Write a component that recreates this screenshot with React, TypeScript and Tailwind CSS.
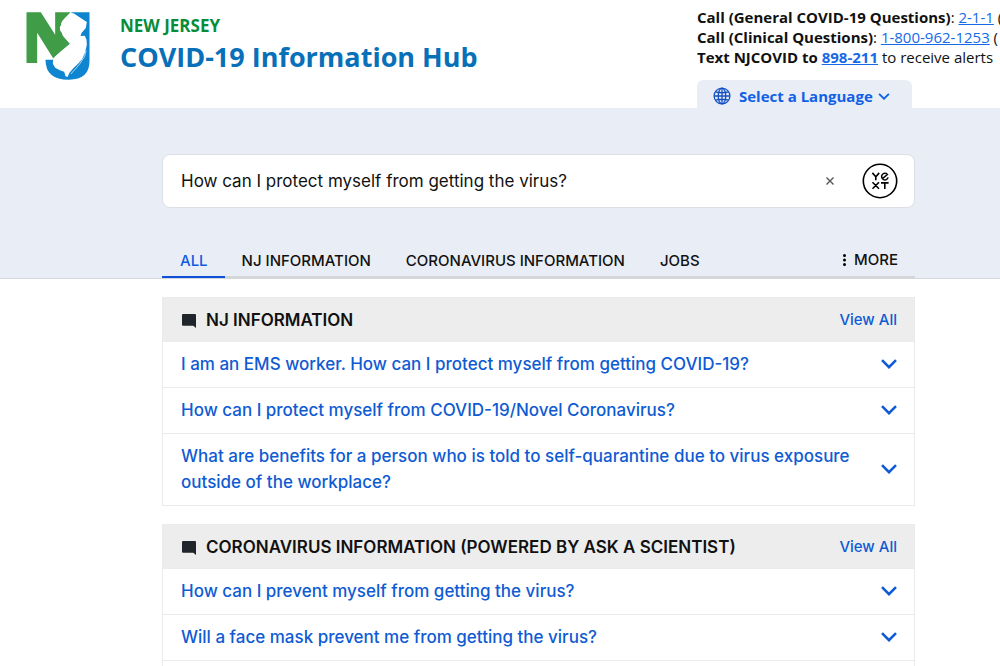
import { useState } from "react";

const sections = [
  {
    title: "NJ INFORMATION",
    questions: [
      "I am an EMS worker. How can I protect myself from getting COVID-19?",
      "How can I protect myself from COVID-19/Novel Coronavirus?",
      "What are benefits for a person who is told to self-quarantine due to virus exposure outside of the workplace?",
    ],
  },
  {
    title: "CORONAVIRUS INFORMATION (POWERED BY ASK A SCIENTIST)",
    questions: [
      "How can I prevent myself from getting the virus?",
      "Will a face mask prevent me from getting the virus?",
      "",
    ],
  },
];

const tabs = ["NJ INFORMATION", "CORONAVIRUS INFORMATION", "JOBS"];

function Logo() {
  return (
    <svg className="h-[68px] w-16 shrink-0" viewBox="50 35 191 204" role="img" aria-label="NJ">
      <path fill="#0d85d0" d="M186 36H240V182Q240 238 178 238Q108 238 108 178H140L175 130Z" />
      <path fill="#409c46" d="M51 36H94L137 103V36H183L156 66L152 86L160 104L181 130L152 156L131 174L83 97V188H51Z" />
      <path
        fill="#fff"
        d="M183 38L192 39L232 65L229 83L216 98L213 107L226 106L231 118L232 134L226 158L218 176L205 191L192 203L180 217L174 230L168 228L164 214L151 210L137 202L130 190L131 179L138 168L152 155L158 150L181 130L160 106L158 98L152 91L151 80L158 72L158 62L170 49Z"
      />
      <path fill="none" stroke="#fff" strokeWidth="2" d="M230 150L225 169L209 193L184 221" />
    </svg>
  );
}

function Globe() {
  return (
    <svg className="size-[18px]" viewBox="0 0 18 18" fill="none" stroke="#1550c4" strokeWidth="1.3" aria-hidden="true">
      <circle cx="9" cy="9" r="7.9" />
      <ellipse cx="9" cy="9" rx="3.8" ry="7.9" />
      <path d="M9 1V17M1 9H17M2.4 4.9Q9 6.6 15.6 4.9M2.4 13.1Q9 11.4 15.6 13.1" />
    </svg>
  );
}

function Chevron({ className }: { className: string }) {
  return (
    <svg className={className} viewBox="0 0 16 10" fill="none" stroke="currentColor" strokeWidth="2.6" aria-hidden="true">
      <path d="M1 1.2L8 8.2L15 1.2" />
    </svg>
  );
}

function YextLogo() {
  return (
    <svg className="size-9" viewBox="0 0 36 36" fill="none" stroke="#000" strokeWidth="1.6" aria-hidden="true">
      <circle cx="18" cy="18" r="16.7" />
      <path d="M10.4 9.9L13.8 13.7L17.2 9.9M13.8 13.7V17.3" />
      <path d="M20.4 15.6L25.4 11.5A3.3 3.3 0 1 0 26.1 14.4" strokeWidth="1.5" />
      <path d="M10.5 19.2L17 25.7M17 19.2L10.5 25.7M19 19.9H26.6M22.8 19.9V26" />
    </svg>
  );
}

export default function App() {
  const [query, setQuery] = useState("How can I protect myself from getting the virus?");
  return (
    <div className="h-screen overflow-hidden bg-white font-['Inter',sans-serif] text-[#111]">
      <header className="flex h-[108px] justify-between overflow-hidden pl-[26px] font-['Open_Sans',sans-serif]">
        <a href="#home" className="flex items-start gap-[30px] pt-3">
          <Logo />
          <span className="flex flex-col pt-1">
            <span className="text-[17px] leading-5 font-bold text-[#078d39]">NEW JERSEY</span>
            <span className="text-[27px] leading-[42px] font-bold whitespace-nowrap text-[#0870b8]">
              COVID-19 Information Hub
            </span>
          </span>
        </a>
        <div className="flex w-[303px] flex-col items-start justify-between overflow-hidden pt-[7px]">
          <div className="text-[15px] leading-5 whitespace-nowrap">
            <p>
              <b>Call (General COVID-19 Questions)</b>: <a href="tel:211" className="text-[#1769e8] underline">2-1-1</a> (
            </p>
            <p>
              <b>Call (Clinical Questions)</b>: <a href="tel:18009621253" className="text-[#1769e8] underline">1-800-962-1253</a> (
            </p>
            <p>
              <b>Text NJCOVID to <a href="sms:898211" className="text-[#1769e8] underline">898-211</a></b> to receive alerts
            </p>
          </div>
          <button className="flex h-7 items-center rounded-t-md bg-[#e9eef6] pt-1 pr-[22px] pl-4 text-[15px] font-bold text-[#1260e6]">
            <Globe />
            <span className="pr-[5px] pl-2">Select a Language</span>
            <Chevron className="h-[7px] w-3" />
          </button>
        </div>
      </header>

      <div className="border-b border-[#d5d9de] bg-[#e9eef6] pt-[46px] pr-[85px] pl-[162px]">
        <form
          className="flex h-[54px] items-center rounded-lg border border-[#dcdfe3] bg-white pr-4 pl-[18px]"
          onSubmit={(e) => e.preventDefault()}
        >
          <input
            aria-label="Search"
            className="min-w-0 flex-1 text-[17px] leading-6 outline-none"
            value={query}
            onChange={(e) => setQuery(e.target.value)}
          />
          <button type="button" aria-label="Clear" className="mr-6 p-1" onClick={() => setQuery("")}>
            <svg className="size-2" viewBox="0 0 8 8" stroke="#555" strokeWidth="1.4" aria-hidden="true">
              <path d="M0.5 0.5L7.5 7.5M7.5 0.5L0.5 7.5" />
            </svg>
          </button>
          <button type="submit" aria-label="Submit">
            <YextLogo />
          </button>
        </form>
        <nav className="mt-[35px] flex h-[35px] border-b-2 border-[#d5d6d8] text-[15px] leading-[35px] font-medium whitespace-nowrap">
          <a href="#all" className="h-[35px] border-b-2 border-[#0f50d8] pr-[17px] pl-[18px] text-[#0f5be0]">
            ALL
          </a>
          {tabs.map((tab) => (
            <a key={tab} href="#results" className="pr-[18px] pl-[17px]">
              {tab}
            </a>
          ))}
          <button className="ml-auto flex items-center gap-2 pr-[17px]">
            <svg className="h-3 w-[3px]" viewBox="0 0 3 12" aria-hidden="true">
              <circle cx="1.5" cy="1.6" r="1.5" />
              <circle cx="1.5" cy="6" r="1.5" />
              <circle cx="1.5" cy="10.4" r="1.5" />
            </svg>
            MORE
          </button>
        </nav>
      </div>

      <main className="flex flex-col gap-[18px] pt-[18px] pr-[85px] pl-[162px]">
        {sections.map((section) => (
          <section key={section.title} className="border border-[#ebebeb]">
            <div className="flex h-[43px] items-center bg-[#ededed] pt-0.5 pr-[17px] pl-[19px]">
              <svg className="mr-[10px] size-[14px]" viewBox="0 0 14 14" aria-hidden="true">
                <path fill="#20242b" d="M1 0H13Q14 0 14 1V14L11.3 11.8H1Q0 11.8 0 10.8V1Q0 0 1 0Z" />
              </svg>
              <h2 className="flex-1 text-[17px] font-semibold">{section.title}</h2>
              <a href="#view-all" className="text-[15px] font-medium text-[#0f5bd3]">
                View All
              </a>
            </div>
            {section.questions.map((question) => (
              <button
                key={question}
                className="flex min-h-[46px] w-full items-center justify-between border-t border-[#ebebeb] pt-[9px] pr-[17px] pb-[10px] pl-[18px] text-left text-[17px] leading-[26px] font-medium text-[#0f5bd3]"
              >
                <span>{question}</span>
                <Chevron className="h-[10px] w-4 shrink-0" />
              </button>
            ))}
          </section>
        ))}
      </main>
    </div>
  );
}
